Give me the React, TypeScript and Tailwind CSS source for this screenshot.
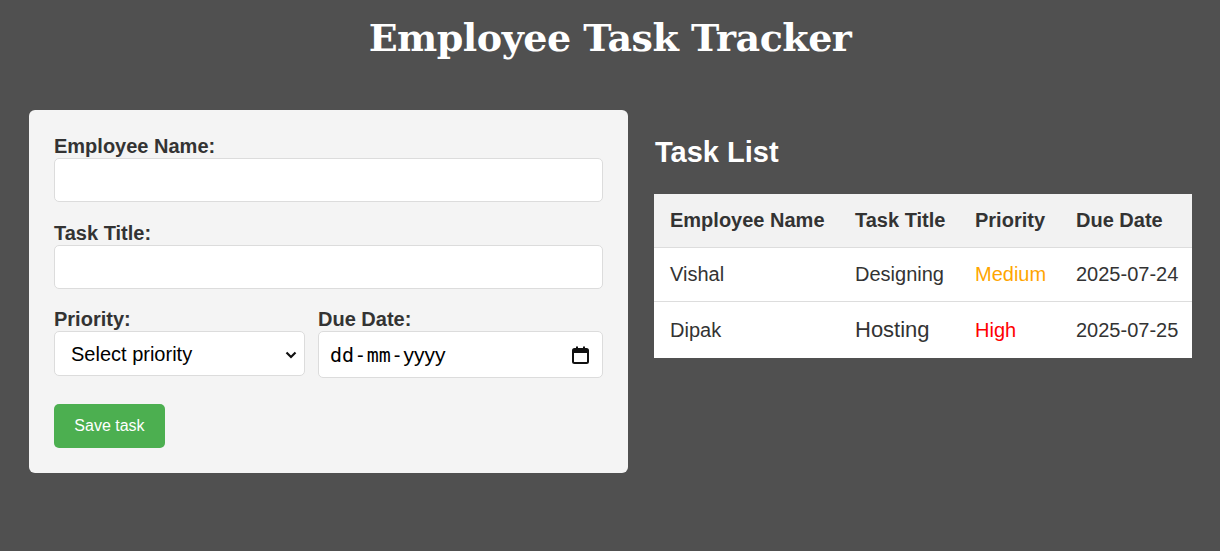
import React from "react";

const sans = { fontFamily: '"Liberation Sans", Arial, sans-serif' };

function Field({ label, children }: { label: string; children: React.ReactNode }) {
  return (
    <div className="flex flex-col">
      <label className="text-[20px] leading-[23px] font-bold text-[#333]">{label}</label>
      {children}
    </div>
  );
}

export default function App() {
  return (
    <div className="min-h-[551px] w-full bg-[#505050]" style={sans}>
      <div className="pt-[14px] h-[110px]">
        <h1
          className="text-center text-white font-bold text-[38px] leading-[48px] tracking-[-0.5px]"
          style={{ fontFamily: '"DejaVu Serif", Georgia, serif' }}
        >
          Employee Task Tracker
        </h1>
      </div>
      <div className="flex pl-[29px] gap-[26px] items-start">
        <div className="w-[599px] bg-[#f4f4f4] rounded-[6px] p-[25px] flex flex-col">
          <Field label="Employee Name:">
            <div className="h-[44px] bg-white border border-[#dcdcdc] rounded-[5px]" />
          </Field>
          <div className="h-[20px]" />
          <Field label="Task Title:">
            <div className="h-[44px] bg-white border border-[#dcdcdc] rounded-[5px]" />
          </Field>
          <div className="h-[19px]" />
          <div className="flex gap-[13px] items-start">
            <div className="w-[251px]">
              <Field label="Priority:">
                <div className="h-[45px] bg-white border border-[#dcdcdc] rounded-[5px] flex items-center pl-[16px] pr-[7px]">
                  <span className="flex-1 text-[20px] text-black">Select priority</span>
                  <svg width="12" height="8" viewBox="0 0 12 8" className="mt-[3px]">
                    <path d="M1.5 1.5 L6 6 L10.5 1.5" fill="none" stroke="#111" strokeWidth="2.2" />
                  </svg>
                </div>
              </Field>
            </div>
            <div className="flex-1">
              <Field label="Due Date:">
                <div className="h-[47px] bg-white border border-[#dcdcdc] rounded-[5px] flex items-center pl-[11px] pr-[13px]">
                  <span className="flex-1 flex items-baseline text-[20px] text-black">
                    <span style={{ fontFamily: '"DejaVu Sans Mono", monospace' }}>dd</span>
                    <span className="px-[3px]">-</span>
                    <span style={{ fontFamily: '"DejaVu Sans Mono", monospace' }}>mm</span>
                    <span className="px-[3px]">-</span>
                    <span className="text-[21px]" style={sans}>yyyy</span>
                  </span>
                  <svg width="17" height="18" viewBox="0 0 17 18">
                    <rect x="1" y="3" width="15" height="14" rx="1.5" fill="none" stroke="#111" strokeWidth="2" />
                    <rect x="1" y="3" width="15" height="4" fill="#111" />
                    <rect x="4" y="0.5" width="2" height="3" fill="#111" />
                    <rect x="11" y="0.5" width="2" height="3" fill="#111" />
                  </svg>
                </div>
              </Field>
            </div>
          </div>
          <div className="h-[26px]" />
          <button className="self-start w-[111px] h-[44px] bg-[#4caf50] text-white text-[16px] rounded-[5px]">
            Save task
          </button>
        </div>

        <div className="w-[538px]">
          <h2 className="text-white font-bold text-[29px] leading-[34px] mt-[25px] mb-[25px] pl-[1px]">Task List</h2>
          <table className="w-[538px] bg-white border-collapse text-[20px] text-[#333]">
            <thead>
              <tr className="bg-[#f2f2f2] border-b border-[#ddd]">
                <th className="w-[185px] text-left font-bold py-[15px] pl-[16px] leading-[23px]">Employee Name</th>
                <th className="w-[120px] text-left font-bold py-[15px] pl-[16px] leading-[23px]">Task Title</th>
                <th className="w-[101px] text-left font-bold py-[15px] pl-[16px] leading-[23px]">Priority</th>
                <th className="w-[132px] text-left font-bold py-[15px] pl-[16px] leading-[23px]">Due Date</th>
              </tr>
            </thead>
            <tbody>
              <tr className="border-b border-[#ddd]">
                <td className="py-[15px] pl-[16px] leading-[23px]">Vishal</td>
                <td className="py-[15px] pl-[16px] leading-[23px]">Designing</td>
                <td className="py-[15px] pl-[16px] leading-[23px] text-[#ffa500]">Medium</td>
                <td className="py-[15px] pl-[16px] leading-[23px]">2025-07-24</td>
              </tr>
              <tr>
                <td className="py-[15px] pl-[16px] leading-[23px]">Dipak</td>
                <td className="py-[15px] pl-[16px] leading-[26px] text-[22px]">Hosting</td>
                <td className="py-[15px] pl-[16px] leading-[23px] text-[#ff0000]">High</td>
                <td className="py-[15px] pl-[16px] leading-[23px]">2025-07-25</td>
              </tr>
            </tbody>
          </table>
        </div>
      </div>
    </div>
  );
}
